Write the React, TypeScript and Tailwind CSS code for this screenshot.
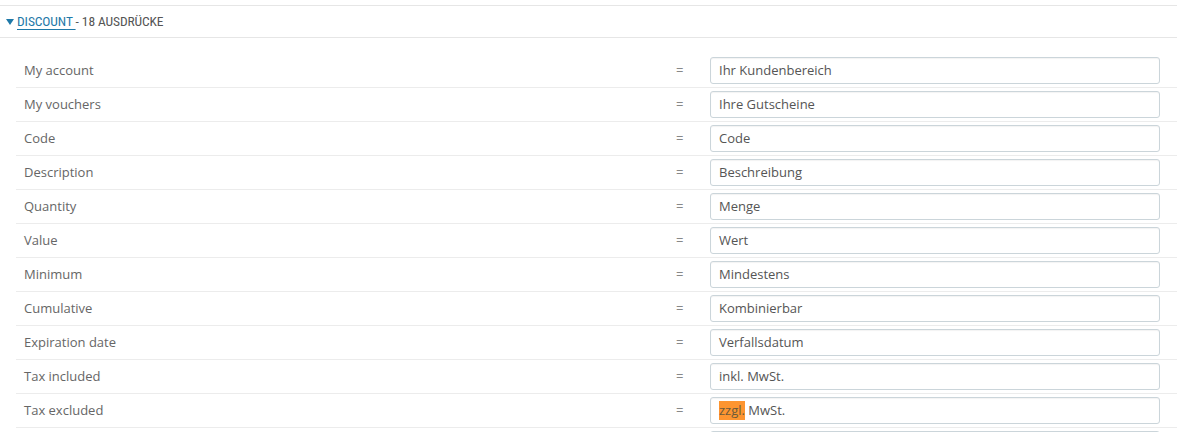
import React from "react";

const rows: [string, string][] = [
  ["My account", "Ihr Kundenbereich"],
  ["My vouchers", "Ihre Gutscheine"],
  ["Code", "Code"],
  ["Description", "Beschreibung"],
  ["Quantity", "Menge"],
  ["Value", "Wert"],
  ["Minimum", "Mindestens"],
  ["Cumulative", "Kombinierbar"],
  ["Expiration date", "Verfallsdatum"],
  ["Tax included", "inkl. MwSt."],
  ["Tax excluded", "zzgl. MwSt."],
  ["", ""],
];

export default function App() {
  return (
    <div
      className="w-[1177px] h-[432px] overflow-hidden bg-white text-[13px] text-[#555]"
      style={{ fontFamily: '"Open Sans", "Liberation Sans", sans-serif' }}
    >
      <div className="h-[5px]" />
      <div className="border-t border-[#e6e6e6] h-[33px] flex items-center pl-[6px] border-b">
        <span className="inline-block w-0 h-0 border-l-[4px] border-r-[4px] border-t-[6px] border-l-transparent border-r-transparent border-t-[#1f79a8] mr-[3px] mt-[1px]" />
        <span
          className="text-[13.5px] uppercase tracking-[-0.1px]"
          style={{ fontFamily: '"Liberation Sans Narrow", "Roboto Condensed", "Open Sans", sans-serif' }}
        >
          <span className="text-[#1f79a8] underline underline-offset-[3px]">Discount </span>
          <span className="text-[#555]">- 18 Ausdrücke</span>
        </span>
      </div>
      <div className="h-[16px]" />
      <div className="ml-[16px]">
        {rows.map(([k, v], i) => (
          <div key={i} className="flex items-center h-[34px] border-b border-[#ececec]">
            <div className="w-[650px] pl-[8px] text-[#666]">{k}</div>
            <div className="w-[44px] pl-[10px] text-[#888]">{i < 11 ? "=" : ""}</div>
            <div className="w-[450px] h-[27px] border border-[#cbd5da] rounded-[3px] shadow-[inset_0_1px_1px_rgba(0,0,0,0.05)] flex items-center pl-[8px] text-[#555]">
              {i === 10 ? (
                <>
                  <span className="bg-[#fd9530] text-[#6b5a3a]">zzgl.</span>
                  <span>&nbsp;MwSt.</span>
                </>
              ) : (
                v
              )}
            </div>
          </div>
        ))}
      </div>
    </div>
  );
}
